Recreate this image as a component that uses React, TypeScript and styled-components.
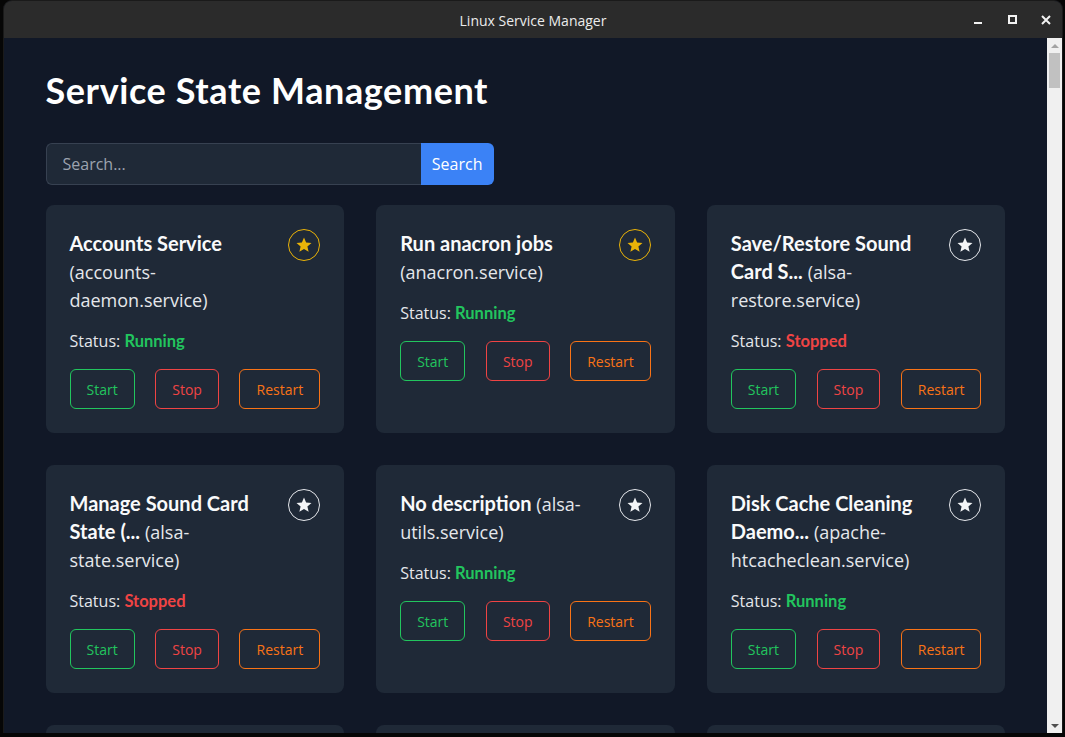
import React from "react";
import styled, { createGlobalStyle } from "styled-components";

const GlobalStyle = createGlobalStyle`
  html, body {
    margin: 0;
    padding: 0;
    background: #060606;
    overflow: hidden;
  }
  body {
    font-family: "Open Sans", "Noto Sans", sans-serif;
  }
  * {
    box-sizing: border-box;
  }
`;

const REGULAR = `"Open Sans", "Noto Sans", sans-serif`;
const BOLD = `Lato, "Open Sans", sans-serif`;

const Window = styled.div`
  margin-left: 3px;
  width: 1060px;
  height: 733px;
  border: 1px solid #1a1a1a;
  border-bottom: none;
  border-radius: 9px 9px 0 0;
  overflow: hidden;
  display: flex;
  flex-direction: column;
  background: #111827;
`;

const TitleBar = styled.div`
  height: 37px;
  flex-shrink: 0;
  background: #2b2b2b;
  display: grid;
  grid-template-columns: 1fr auto 1fr;
  align-items: center;
`;

const WindowTitle = styled.div`
  grid-column: 2;
  color: #ececec;
  font-family: ${REGULAR};
  font-size: 14px;
  font-weight: 500;
  padding-top: 2px;
`;

const Controls = styled.div`
  grid-column: 3;
  justify-self: end;
  display: flex;
  align-items: center;
  gap: 18px;
  padding-right: 8px;
`;

const ControlButton = styled.div`
  width: 16px;
  height: 16px;
  display: flex;
  align-items: center;
  justify-content: center;
  color: #f2f2f2;
`;

const MinimizeBar = styled.div`
  width: 8px;
  height: 2px;
  background: #f2f2f2;
  margin-top: 7px;
`;

const MaximizeBox = styled.div`
  width: 9px;
  height: 9px;
  border: 2px solid #f2f2f2;
`;

const WindowBody = styled.div`
  flex: 1;
  min-height: 0;
  display: flex;
`;

const Viewport = styled.div`
  flex: 1;
  min-width: 0;
  overflow: hidden;
  background: #111827;
`;

const ScrollTrack = styled.div`
  width: 15px;
  flex-shrink: 0;
  background: #f0f0f0;
  display: flex;
  flex-direction: column;
`;

const ScrollArrow = styled.div<{ $down?: boolean }>`
  height: 15px;
  display: flex;
  align-items: center;
  justify-content: center;

  &::before {
    content: "";
    width: 0;
    height: 0;
    border-left: 4px solid transparent;
    border-right: 4px solid transparent;
    ${(p) =>
      p.$down ? "border-top: 4px solid #505050;" : "border-bottom: 4px solid #a3a3a3;"}
  }
`;

const ScrollThumb = styled.div`
  height: 35px;
  margin: 0 2px;
  background: #c1c1c1;
`;

const ScrollSpacer = styled.div`
  flex: 1;
`;

const Page = styled.main`
  max-width: 960px;
  margin: 0 auto;
  padding: 32px 0;
`;

const Heading = styled.h1`
  margin: 0 0 33px;
  font-family: ${BOLD};
  font-weight: 700;
  font-size: 36px;
  line-height: 40px;
  letter-spacing: 0.6px;
  color: #ffffff;
`;

const SearchForm = styled.form`
  display: flex;
  max-width: 448px;
  height: 42px;
  margin-bottom: 20px;
`;

const SearchInput = styled.input`
  flex: 1;
  min-width: 0;
  height: 100%;
  padding: 0 16px;
  background: #1f2937;
  border: 1px solid #374151;
  border-right: none;
  border-radius: 6px 0 0 6px;
  color: #f3f4f6;
  font-family: ${REGULAR};
  font-size: 16px;
  outline: none;

  &::placeholder {
    color: #9ca3af;
  }
`;

const SearchButton = styled.button`
  height: 100%;
  padding: 0 11px;
  background: #3b82f6;
  border: none;
  border-radius: 0 6px 6px 0;
  color: #ffffff;
  font-family: ${REGULAR};
  font-size: 16px;
  cursor: pointer;
`;

const Grid = styled.div`
  display: grid;
  grid-template-columns: repeat(3, minmax(0, 1fr));
  gap: 32px;
`;

const Card = styled.div`
  min-width: 0;
  background: #1f2937;
  border-radius: 8px;
  padding: 24px;
`;

const CardHeader = styled.div`
  display: flex;
  justify-content: space-between;
  align-items: flex-start;
  gap: 16px;
`;

const Title = styled.h3`
  margin: 0;
  flex: 1;
  min-width: 0;
  overflow-wrap: anywhere;
  font-family: ${BOLD};
  font-weight: 700;
  font-size: 20px;
  line-height: 28px;
  color: #f9fafb;
`;

const UnitName = styled.span`
  font-family: ${REGULAR};
  font-weight: 400;
  font-size: 18px;
  line-height: 1;
  color: #e5e7eb;
`;

const FavButton = styled.button<{ $active: boolean }>`
  flex-shrink: 0;
  width: 32px;
  height: 32px;
  padding: 0;
  border-radius: 50%;
  background: transparent;
  border: 1px solid ${(p) => (p.$active ? "#eab308" : "#e5e7eb")};
  color: ${(p) => (p.$active ? "#eab308" : "#f3f4f6")};
  display: flex;
  align-items: center;
  justify-content: center;
  cursor: pointer;
`;

const Status = styled.p`
  margin: 16px 0 0;
  font-family: ${REGULAR};
  font-size: 16px;
  line-height: 24px;
  color: #e5e7eb;
`;

const StatusValue = styled.span<{ $running: boolean }>`
  font-family: ${BOLD};
  font-weight: 700;
  font-size: 16.5px;
  line-height: 1;
  color: ${(p) => (p.$running ? "#22c55e" : "#ef4444")};
`;

const Actions = styled.div`
  display: flex;
  justify-content: space-between;
  margin-top: 16px;
`;

const ActionButton = styled.button<{ $color: string }>`
  height: 40px;
  padding: 0 16px;
  background: transparent;
  border: 1px solid ${(p) => p.$color};
  border-radius: 6px;
  color: ${(p) => p.$color};
  font-family: ${REGULAR};
  font-size: 14px;
  cursor: pointer;
`;

type Service = {
  title: string;
  unit: string;
  running: boolean;
  favorite?: boolean;
};

const services: Service[] = [
  { title: "Accounts Service", unit: "accounts-daemon.service", running: true, favorite: true },
  { title: "Run anacron jobs", unit: "anacron.service", running: true, favorite: true },
  { title: "Save/Restore Sound Card S...", unit: "alsa-restore.service", running: false },
  { title: "Manage Sound Card State (...", unit: "alsa-state.service", running: false },
  { title: "No description", unit: "alsa-utils.service", running: true },
  { title: "Disk Cache Cleaning Daemo...", unit: "apache-htcacheclean.service", running: true },
  { title: "The Apache HTTP Server", unit: "apache2.service", running: true },
  { title: "AppArmor initialization", unit: "apparmor.service", running: true },
  { title: "Daily apt download activi...", unit: "apt-daily.service", running: false },
  { title: "Avahi mDNS/DNS-SD Stack", unit: "avahi-daemon.service", running: true },
  { title: "Bluetooth service", unit: "bluetooth.service", running: true },
  { title: "Set console font and keym...", unit: "console-setup.service", running: false },
];

const ServiceCard = ({ service }: { service: Service }) => (
  <Card>
    <CardHeader>
      <Title>
        {service.title} <UnitName>({service.unit})</UnitName>
      </Title>
      <FavButton $active={!!service.favorite} type="button">
        <svg width="18" height="18" viewBox="0 0 24 24" fill="currentColor">
          <path d="M12 17.27 18.18 21l-1.64-7.03L22 9.24l-7.19-.61L12 2 9.19 8.63 2 9.24l5.46 4.73L5.82 21z" />
        </svg>
      </FavButton>
    </CardHeader>
    <Status>
      Status:{" "}
      <StatusValue $running={service.running}>{service.running ? "Running" : "Stopped"}</StatusValue>
    </Status>
    <Actions>
      <ActionButton $color="#22c55e" type="button">Start</ActionButton>
      <ActionButton $color="#ef4444" type="button">Stop</ActionButton>
      <ActionButton $color="#f97316" type="button">Restart</ActionButton>
    </Actions>
  </Card>
);

export default function App() {
  return (
    <>
      <GlobalStyle />
      <Window>
        <TitleBar>
          <WindowTitle>Linux Service Manager</WindowTitle>
          <Controls>
            <ControlButton><MinimizeBar /></ControlButton>
            <ControlButton><MaximizeBox /></ControlButton>
            <ControlButton>
              <svg width="10" height="10" viewBox="0 0 10 10" stroke="currentColor" strokeWidth="2">
                <path d="M1 1l8 8M9 1l-8 8" />
              </svg>
            </ControlButton>
          </Controls>
        </TitleBar>
        <WindowBody>
          <Viewport>
            <Page>
              <Heading>Service State Management</Heading>
              <SearchForm onSubmit={(e) => e.preventDefault()}>
                <SearchInput placeholder="Search..." />
                <SearchButton type="submit">Search</SearchButton>
              </SearchForm>
              <Grid>
                {services.map((s) => (
                  <ServiceCard key={s.unit} service={s} />
                ))}
              </Grid>
            </Page>
          </Viewport>
          <ScrollTrack>
            <ScrollArrow />
            <ScrollThumb />
            <ScrollSpacer />
            <ScrollArrow $down />
          </ScrollTrack>
        </WindowBody>
      </Window>
    </>
  );
}
